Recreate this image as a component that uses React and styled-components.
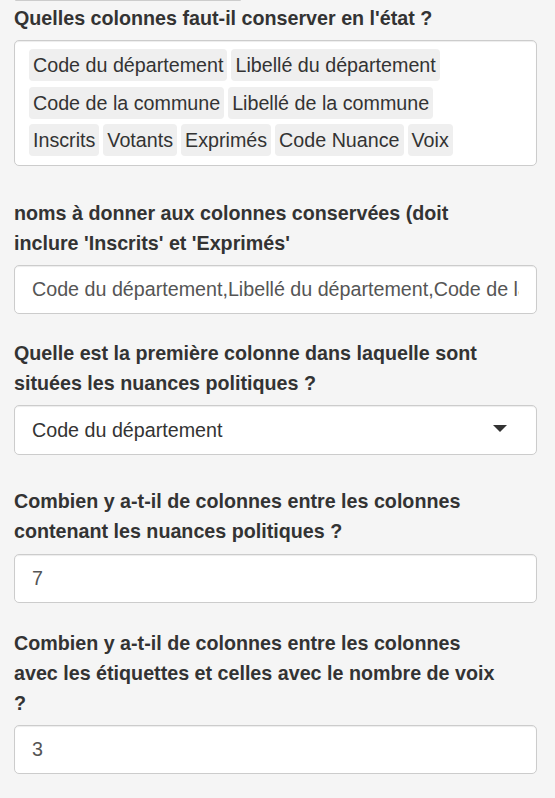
import React from "react";
import styled, { createGlobalStyle } from "styled-components";

const keptColumns = [
  "Code du département",
  "Libellé du département",
  "Code de la commune",
  "Libellé de la commune",
  "Inscrits",
  "Votants",
  "Exprimés",
  "Code Nuance",
  "Voix",
];

function App() {
  return (
    <>
      <GlobalStyle />
      <Well>
        <CutOffBox />
        <FormGroup $gap={31.5}>
          <Label>Quelles colonnes faut-il conserver en l'état ?</Label>
          <TagBox>
            {keptColumns.map((name) => (
              <Tag key={name}>{name}</Tag>
            ))}
          </TagBox>
        </FormGroup>

        <FormGroup $gap={23.5}>
          <Label>
            noms à donner aux colonnes conservées (doit inclure 'Inscrits' et
            'Exprimés'
          </Label>
          <TextInput readOnly defaultValue={keptColumns.join(",")} />
        </FormGroup>

        <FormGroup $gap={31.5}>
          <Label>
            Quelle est la première colonne dans laquelle sont situées les
            nuances politiques ?
          </Label>
          <Select>
            <span>Code du département</span>
            <Caret />
          </Select>
        </FormGroup>

        <FormGroup $gap={25}>
          <Label>
            Combien y a-t-il de colonnes entre les colonnes contenant les
            nuances politiques ?
          </Label>
          <TextInput readOnly defaultValue="7" />
        </FormGroup>

        <FormGroup $gap={25}>
          <Label>
            Combien y a-t-il de colonnes entre les colonnes avec les étiquettes
            et celles avec le nombre de voix ?
          </Label>
          <TextInput readOnly defaultValue="3" />
        </FormGroup>
      </Well>
    </>
  );
}

const GlobalStyle = createGlobalStyle`
  html, body {
    margin: 0;
    background: #f5f5f5;
  }
  body {
    font-family: "Liberation Sans", Arial, Helvetica, sans-serif;
    font-size: 19.7px;
    line-height: 30px;
    color: #333;
  }
`;

const Well = styled.div`
  padding: 0 18px 0 14px;
  background: #f5f5f5;
`;

const CutOffBox = styled.div`
  width: 226px;
  height: 0;
  margin: 0 0 1.5px 1px;
  border-bottom: 1px solid #ccc;
  border-radius: 0 0 4px 4px;
`;

const FormGroup = styled.div`
  margin-bottom: ${(p) => p.$gap}px;
`;

const Label = styled.label`
  display: block;
  padding-right: 36px;
  font-weight: bold;
  margin-bottom: 7.5px;
`;

const TagBox = styled.div`
  display: flex;
  flex-wrap: wrap;
  align-content: flex-start;
  gap: 5.5px 4px;
  height: 126px;
  box-sizing: border-box;
  padding: 8px 50px 8px 14px;
  background: #fff;
  border: 1px solid #ccc;
  border-radius: 5px;
  box-shadow: inset 0 1px 1px rgba(0, 0, 0, 0.075);
`;

const Tag = styled.div`
  height: 32px;
  line-height: 32px;
  padding: 0 4px;
  background: #efefef;
  border-radius: 4px;
  color: #333;
`;

const TextInput = styled.input`
  display: block;
  box-sizing: border-box;
  width: 100%;
  height: 49px;
  padding: 0 17px;
  font: inherit;
  color: #555;
  background: #fff;
  border: 1px solid #ccc;
  border-radius: 5px;
  box-shadow: inset 0 1px 1px rgba(0, 0, 0, 0.075);
  outline: none;
`;

const Select = styled.div`
  display: flex;
  align-items: center;
  justify-content: space-between;
  box-sizing: border-box;
  height: 49.5px;
  padding: 0 29px 0 17px;
  color: #333;
  background: #fff;
  border: 1px solid #ccc;
  border-radius: 5px;
  box-shadow: inset 0 1px 1px rgba(0, 0, 0, 0.075);
`;

const Caret = styled.div`
  width: 0;
  height: 0;
  margin-top: -3px;
  border-style: solid;
  border-width: 7px 7px 0 7px;
  border-color: #333 transparent transparent transparent;
`;

export default App;
